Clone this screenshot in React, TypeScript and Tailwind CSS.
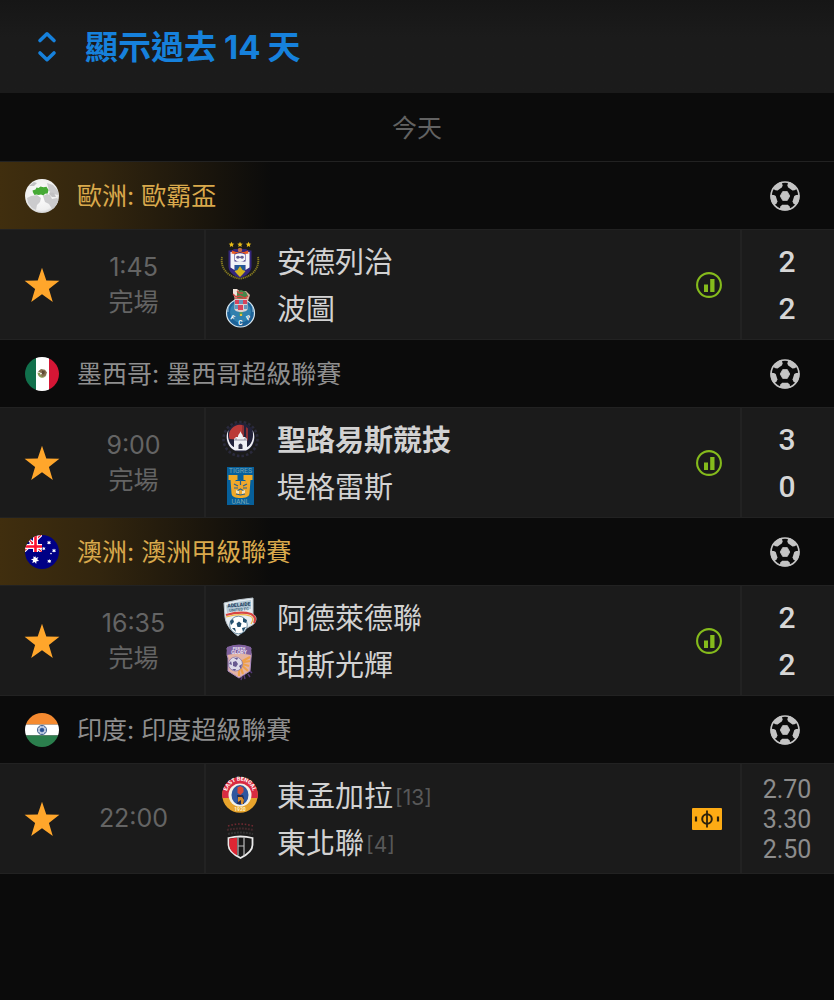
import type { ReactNode } from "react";

/* ---------- interface icons ---------- */

function BallIcon() {
  return (
    <svg viewBox="0 0 30 30" className="size-[30px]" aria-hidden="true">
      <defs>
        <clipPath id="ball-clip">
          <circle cx="15" cy="15" r="14.5" />
        </clipPath>
      </defs>
      <circle cx="15" cy="15" r="14" fill="none" stroke="#c4c4c4" strokeWidth="1.6" />
      <g clipPath="url(#ball-clip)" fill="#c4c4c4">
        {[0, 72, 144, 216, 288].map((angle) => (
          <path
            key={angle}
            transform={`rotate(${angle} 15 15)`}
            d="M8.6 30l2-4.8L12.2 23.8h5.6l1.6 1.4 2 4.8z"
          />
        ))}
      </g>
      <path
        d="M12.7 10.6h4.6l2.5 4.4-2.5 4.4h-4.6L10.200 15z"
        fill="#c4c4c4"
        stroke="#c4c4c4"
        strokeWidth=".8"
        strokeLinejoin="round"
      />
    </svg>
  );
}

function StarIcon() {
  return (
    <svg viewBox="0 0 36 36" className="size-9" aria-hidden="true">
      <path
        d="M18 .8l4.3 12.7 13.1.3-10.5 8.1 3.9 13L18 27.3 7.2 34.9l3.9-13L.6 13.8l13.1-.3z"
        fill="#ffa62b"
      />
    </svg>
  );
}

function StatsIcon() {
  return (
    <svg viewBox="0 0 28 28" className="size-7" role="img" aria-label="統計">
      <circle cx="14" cy="14" r="11.9" fill="none" stroke="#85bb1c" strokeWidth="2.1" />
      <path d="M9 13.4h4V21H9zM15.2 8h4.3v13h-4.3z" fill="#85bb1c" />
    </svg>
  );
}

function PitchIcon() {
  return (
    <svg viewBox="0 0 30 22" className="h-[22px] w-[30px]" role="img" aria-label="陣容">
      <rect width="30" height="22" rx="1" fill="#fdab14" />
      <g fill="none" stroke="#2c210c">
        <circle cx="15" cy="11" r="4.8" strokeWidth="2" />
        <path d="M15 2.5v17" strokeWidth="1.8" />
        <path d="M4 8.5v5M26 8.5v5" strokeWidth="2.2" />
      </g>
    </svg>
  );
}

/* ---------- league badges ---------- */

function Round({ id, children }: { id: string; children: ReactNode }) {
  return (
    <svg viewBox="0 0 34 34" className="size-[34px]" aria-hidden="true">
      <defs>
        <clipPath id={id}>
          <circle cx="17" cy="17" r="17" />
        </clipPath>
      </defs>
      <g clipPath={`url(#${id})`}>{children}</g>
    </svg>
  );
}

function Globe() {
  return (
    <Round id="globe">
      <defs>
        <radialGradient id="globe-sea" cx=".48" cy=".45" r=".58">
          <stop offset="0" stopColor="#fff" />
          <stop offset=".8" stopColor="#efefef" />
          <stop offset="1" stopColor="#c4c4c4" />
        </radialGradient>
      </defs>
      <rect width="34" height="34" fill="url(#globe-sea)" />
      <path
        d="M2 19l4-2 6-1 4 3-1 4-3 3-1 5-4-2-4-5zM18 17l4-2 3 1 2 4 5-1 2 3-4 8-3 0-3-5-4-2zM22 4l6 2 5 6 0 4-5-1-4-3z"
        fill="#cbcbcd"
      />
      <path d="M25 13l4 1 2 4-4 0-3-3zM4 7l5-4 3 1-3 3z" fill="#c2c2c4" />
      <path
        d="M7.500 11.500l3-1 1-2 2 .6 2-1.600 3 .8 3-.6 2 3.300-.8 3.500-2.700.3-1.500 1.800-2.500-1.200-2.500.6-2-.6-2 .6-1.500-2.500z"
        fill="#46aa36"
      />
    </Round>
  );
}

function MexicoFlag() {
  return (
    <Round id="mexico">
      <path d="M0 0h11v34H0z" fill="#11704c" />
      <path d="M11 0h13v34H11z" fill="#fff" />
      <path d="M24 0h10v34H24z" fill="#d51635" />
      <path d="M12.6 15.5c0 6 8 7.4 9 1.5-1.5 3.4-5.6 3-6.6-1z" fill="#8d9a56" />
      <path
        d="M13 14.5l3-2.5 4 .8 2 2.7-1.3 3.3-3.2 1.2-2-2 1.7-1.5-2.2-1z"
        fill="#85704f"
      />
      <path d="M17 13.5l3 1-1 3-2-.5z" fill="#5d4a36" />
    </Round>
  );
}

function AustraliaFlag() {
  const stars: [number, number, number][] = [
    [24, 7.5, 2],
    [18.8, 13.5, 1.7],
    [29, 15.5, 2],
    [24.3, 26, 2.1],
    [26, 18.5, 1],
  ];
  return (
    <Round id="australia">
      <path d="M0 0h34v34H0z" fill="#000085" />
      <svg x="-2" y="0" width="19" height="17" viewBox="0 0 19 17">
        <path d="M-1-2l21 20M-1 18L20-2" stroke="#fff" strokeWidth="3.4" />
        <path d="M-1-2l21 20M-1 18L20-2" stroke="#f0162c" strokeWidth="1.2" />
        <path d="M0 11.5h19M12.5 0v17" stroke="#fff" strokeWidth="5" />
        <path d="M0 11.5h19M12.5 0v17" stroke="#ff1130" strokeWidth="2.6" />
      </svg>
      <path
        d="M10 20.5l1 2.4 2.5-.8-1.3 2.2 1.9 1.8-2.6.2-.3 2.7-1.5-2.1-2.4 1.2.8-2.5-2.3-1.3 2.6-.5.1-2.6 1.6 1z"
        fill="#fff"
      />
      {stars.map(([x, y, r]) => (
        <path
          key={`${x}-${y}`}
          transform={`translate(${x} ${y}) scale(${r})`}
          d="M0-1l.3.6.7-.2-.4.6.3.7-.6-.1-.3.4-.3-.4-.6.1.3-.7-.4-.6.7.2z"
          fill="#fff"
        />
      ))}
    </Round>
  );
}

function IndiaFlag() {
  return (
    <Round id="india">
      <path d="M0 0h34v11.5H0z" fill="#f58a30" />
      <path d="M0 11.5h34v11H0z" fill="#fff" />
      <path d="M0 22.5h34V34H0z" fill="#2b7f4d" />
      <circle cx="17" cy="17" r="4.6" fill="#c9d3e6" stroke="#42618f" strokeWidth="1" />
      <path
        d="M17 12.5v9M12.5 17h9M13.8 13.8l6.4 6.4M20.2 13.8l-6.4 6.4"
        stroke="#7f98c0"
        strokeWidth=".7"
      />
      <circle cx="17" cy="17" r="2.1" fill="#274f93" />
    </Round>
  );
}

/* ---------- club crests ---------- */

function Crest({ children }: { children: ReactNode }) {
  return (
    <svg viewBox="0 0 40 40" className="size-10 shrink-0" aria-hidden="true">
      {children}
    </svg>
  );
}

function Anderlecht() {
  return (
    <Crest>
      {[11.5, 20, 28.5].map((x) => (
        <path
          key={x}
          transform={`translate(${x} 3.5)`}
          d="M0-2.7l.8 1.8 2 .2-1.5 1.3.4 2L0 1.6l-1.7 1 .4-2L-2.8-.7l2-.2z"
          fill="#e9bd17"
        />
      ))}
      <path
        d="M2 16c-2 10 5 20 18 21.500C33 36 40 26 38 16"
        fill="none"
        stroke="#857a1f"
        strokeWidth="1.9"
        strokeDasharray="1.3 .7"
      />
      <path
        d="M8.500 9.500c3 0 4-.5 5.500-1.500h12c1.500 1 2.500 1.500 5.500 1.500v16C31.500 31 26 35 20 37 14 35 8.500 31 8.500 25.500z"
        fill="#34267c"
      />
      <path d="M10.500 11h4v18l-4-2.500zM25.500 11h4v15.500l-4 2.500z" fill="#f4f4f8" />
      <path d="M14 20.500h12v3.500H14z" fill="#f0f0f6" />
      <path d="M12 9.500l4 1.500h8l4-1.500.5 3-3 .5-5.500-2-5.500 2-3-.5z" fill="#e75b21" />
      <circle cx="20" cy="9" r="2.2" fill="#bd6f45" />
      <path d="M15 13.500q5-2.500 10 0v5.500q-5 4-10 0z" fill="#f5f5f7" />
      <path
        d="M16 16q2-2.500 4 0 2-2.500 4 0-.6 3-4 .8-3.400 2.200-4-.8z"
        fill="#5f5c8e"
      />
      <path d="M15 24h10v7l-5 4-5-4z" fill="#245596" />
      <path d="M20 25l2.500 4 3 1-2.500 3-3 3-3-3-2.500-3 3-1z" fill="#d4b51c" />
    </Crest>
  );
}

function Porto() {
  return (
    <Crest>
      <circle cx="20.5" cy="25" r="14" fill="#1d6298" stroke="#d9e6ee" strokeWidth="1.2" />
      <circle cx="20.5" cy="24" r="10.5" fill="#3d94bd" opacity=".6" />
      <path d="M8 24q-1-9 8-12M33 24q1-9-8-12" stroke="#c2dde9" strokeWidth=".7" fill="none" />
      <path d="M13 2l4-1 4 3 5-1 4 4-2 6h-13z" fill="#d8b39d" />
      <path d="M13 1l4 0 1 4-3 4-2-3z" fill="#f1e5dc" />
      <path d="M17 4l4-2 5 2 2 4-5 3-6-1z" fill="#47864a" />
      <path
        d="M13 6l3 3 4-1 5 2 3-2M17 3l2 2 4 0M15 11h12"
        stroke="#d44743"
        strokeWidth="1.3"
        fill="none"
      />
      <path d="M14.5 11h13v10c0 4-13 4-13 0z" fill="#d9cfd0" />
      <path d="M15 12h4v4h-4zM23 12h4v4h-4zM18 17h5v5h-5z" fill="#d6435b" />
      <path d="M19 12h4v4h-4zM15 17h3v4h-3zM24 17h3v4h-3z" fill="#6395bc" />
      <path d="M19.5 24h3v4h-3z" fill="#55a05b" />
      <path d="M20 26h2v2h-2z" fill="#efbf36" />
      <g fill="#fff" fontFamily="Roboto, sans-serif" fontSize="6.5" fontWeight="700" textAnchor="middle">
        <text x="12.5" y="32" transform="rotate(30 12.5 30)">F</text>
        <text x="20.5" y="37">C</text>
        <text x="28.5" y="32" transform="rotate(-30 28.5 30)">P</text>
      </g>
    </Crest>
  );
}

function SanLuis() {
  return (
    <Crest>
      <circle
        cx="20.5"
        cy="20"
        r="17"
        fill="none"
        stroke="#2a2a3c"
        strokeWidth="2.6"
        strokeDasharray="2.6 2"
      />
      <circle cx="20.5" cy="18.5" r="14.5" fill="#22223a" />
      <path d="M9.500 20a11 11 0 0 1 13-14v15z" fill="#bb3a38" />
      <path d="M22 6l2 .5v12h-2zM26 8l2 1.5v12h-2z" fill="#8f2f34" />
      <path
        d="M8.5 11c-4 7-1 17 6.5 20.5h11c7.500-3.500 10.500-13.500 6.500-20.500 2 9-2 16-6.500 17.500H15c-4.500-1.500-8.500-8.500-6.500-17.500z"
        fill="#f0f0f4"
      />
      <path d="M14 30V20l2-2h2c0-3 2-3 2.500-6 .5 3 2.500 3 2.500 6h2l2 2v10z" fill="#f0f0f4" />
      <path d="M18.5 30v-4q2-3 4 0v4z" fill="#33334a" />
      <path d="M14 21h13M16 19v2M25 19v2" stroke="#7b7b90" strokeWidth=".8" />
    </Crest>
  );
}

function Tigres() {
  return (
    <Crest>
      <path d="M7 1h27v38H7z" fill="#07609b" />
      <g fill="#75a4b5" fontFamily="Roboto, sans-serif" fontSize="7" textAnchor="middle">
        <text x="20.5" y="7">TIGRES</text>
        <text x="20.5" y="38.2">UANL</text>
      </g>
      <path
        d="M8.500 9h9v5h-2l1 6h8l1-6h-2V9h9v5h-2l-1 13c0 4-4 5-9 5s-9-1-9-5l-1-13h-2z"
        fill="#f2ab27"
      />
      <path d="M12 18l4-3h9l4 3v6l-4 6h-9l-4-6z" fill="#eea72e" />
      <path
        d="M14 18l4 2M27 18l-4 2M14 22l4 0M27 22h-4M20.5 14v5M17 25l3.500-2 3.500 2M16 28l4.500 1 4.500-1"
        fill="none"
        stroke="#28628b"
        strokeWidth="1.2"
      />
      <path d="M16 24l3 1v3l-3-1zM25 24l-3 1v3l3-1z" fill="#f4e4be" />
    </Crest>
  );
}

function Adelaide() {
  return (
    <Crest>
      <path
        d="M4 6q15-4 29-5v16c3 2 4 5 2 8-1 3-5 4-8 6l-9 8C11 34 6 28 5 20z"
        fill="#e6edf2"
        stroke="#bcc7cf"
        strokeWidth="1"
      />
      <path d="M6 8q13-4 25-5v9q-12 0-24 4z" fill="#b4c8d5" />
      <text
        x="19"
        y="9.5"
        transform="rotate(-5 19 9)"
        fill="#1f4463"
        fontFamily="Roboto, sans-serif"
        fontSize="5"
        fontWeight="900"
        textAnchor="middle"
      >
        ADELAIDE
      </text>
      <text
        x="19"
        y="14"
        transform="rotate(-5 19 13)"
        fill="#41657e"
        fontFamily="Roboto, sans-serif"
        fontSize="4"
        fontWeight="700"
        textAnchor="middle"
      >
        UNITED FC
      </text>
      <path d="M6 18q15-4 25-1 6 3 3 9" fill="none" stroke="#d84542" strokeWidth="2.2" />
      <path d="M6 20q15-4 24-1 5 2 1 8" fill="none" stroke="#f0b743" strokeWidth="1.2" />
      <circle cx="18.5" cy="28" r="8.8" fill="#fff" stroke="#50768f" strokeWidth=".8" />
      <path
        d="M16.5 26.5l2.5-2 2.5 2-1 3.500h-3zM10 24l3-2 1 3-3 3zM23 21l4 2-1 3-3-1zM12 31l3 0 1 4zM22 31l4-1-3 5z"
        fill="#24506f"
      />
    </Crest>
  );
}

function Perth() {
  return (
    <Crest>
      <path
        d="M7 4q12-5 24 0c-1 3 1 6 0 10l-1 13-11 7-11-7V14C6 10 8 8 7 4z"
        fill="#e3b4a5"
        stroke="#a989c0"
        strokeWidth="1"
      />
      <path
        d="M19 19l11-6M19 19l11-2M19 19l10 3M19 19l9 8M19 19l4 11M19 19v13"
        stroke="#eea14c"
        strokeWidth="2.2"
      />
      <path d="M7 3q12-5 24 0v8q-12-3-24 0z" fill="#7f609d" />
      <g fill="#e9e2f2" fontFamily="Roboto, sans-serif" fontWeight="700" textAnchor="middle">
        <text x="19" y="5.5" fontSize="4">PERTH</text>
        <text x="19" y="10.2" fontSize="5">GLORY</text>
      </g>
      <circle cx="15.5" cy="20" r="7" fill="#dedbea" stroke="#8875ab" strokeWidth=".8" />
      <path
        d="M13 18l3-1 2 3-2 3-3-1zM9 20l2-3 1 4zM14 14l4 0-1 2zM19 22l3-2-1 5zM12 25l4 0-1 2z"
        fill="#685a91"
      />
      <path d="M21 36l1-3M25 35l-1-4M30 33l-2-3M32 29l-2-2" stroke="#573b79" strokeWidth="1.4" />
    </Crest>
  );
}

function EastBengal() {
  return (
    <Crest>
      <defs>
        <path id="eb-top" d="M7.2 22A13.2 13.2 0 1 1 32.8 22" />
      </defs>
      <circle cx="20" cy="20" r="17.8" fill="#e8a42c" />
      <path d="M2.500 23a17.800 17.800 0 1 1 35 0z" fill="#d92b42" />
      <text fill="#fff" fontFamily="Roboto, sans-serif" fontSize="5.5" fontWeight="700">
        <textPath href="#eb-top" startOffset="50%" textAnchor="middle">
          EAST BENGAL
        </textPath>
      </text>
      <circle cx="20" cy="20" r="11.5" fill="#f4f2e7" />
      <ellipse cx="20" cy="20" rx="8.5" ry="10" fill="#2e579f" />
      <path d="M17.500 12.500l3-1.500 3 2v4l-3 3-3-2z" fill="#dc4937" />
      <path d="M17 20h6l1 3v6h-7l1-4z" fill="#252c53" />
      <path d="M18 22l4 0 2 3-1 4h-2v-4l-3 2z" fill="#d78d2c" />
      <text
        x="20"
        y="36.3"
        fill="#fff3c6"
        fontFamily="Roboto, sans-serif"
        fontSize="5"
        fontWeight="700"
        textAnchor="middle"
      >
        1920
      </text>
    </Crest>
  );
}

function NorthEast() {
  return (
    <Crest>
      <path
        d="M8 4q12-4 25 0"
        fill="none"
        stroke="#6e2930"
        strokeWidth="1.6"
        strokeDasharray="1.6 1.8"
      />
      <path
        d="M7 8q13-3 27 0"
        fill="none"
        stroke="#41282b"
        strokeWidth="2"
        strokeDasharray="2 1"
      />
      <path
        d="M8 12q12-3 25 0"
        fill="none"
        stroke="#333333"
        strokeWidth="2"
        strokeDasharray="2 1"
      />
      <path
        d="M8.500 16q12-3 24 0v7c0 6-6 10-12 13-6-3-12-7-12-13z"
        fill="#191919"
        stroke="#e9e9e9"
        strokeWidth="1.8"
      />
      <path d="M9.400 16.700q3-.7 7.600-1v17.500c-4.500-2.500-7.600-6-7.600-10.200z" fill="#dd2633" />
      <path d="M18 15.5v18M24 15.5v18M18 24h6" stroke="#bcbcbc" strokeWidth="1.2" />
    </Crest>
  );
}

/* ---------- data ---------- */

type Team = { name: string; crest: ReactNode; rank?: number; winner?: boolean };
type Fixture = {
  league: string;
  badge: ReactNode;
  featured?: boolean;
  time: string;
  status?: string;
  teams: Team[];
  score?: number[];
  odds?: string[];
};

const fixtures: Fixture[] = [
  {
    league: "歐洲: 歐霸盃",
    badge: <Globe />,
    featured: true,
    time: "1:45",
    status: "完場",
    teams: [
      { name: "安德列治", crest: <Anderlecht /> },
      { name: "波圖", crest: <Porto /> },
    ],
    score: [2, 2],
  },
  {
    league: "墨西哥: 墨西哥超級聯賽",
    badge: <MexicoFlag />,
    time: "9:00",
    status: "完場",
    teams: [
      { name: "聖路易斯競技", crest: <SanLuis />, winner: true },
      { name: "堤格雷斯", crest: <Tigres /> },
    ],
    score: [3, 0],
  },
  {
    league: "澳洲: 澳洲甲級聯賽",
    badge: <AustraliaFlag />,
    featured: true,
    time: "16:35",
    status: "完場",
    teams: [
      { name: "阿德萊德聯", crest: <Adelaide /> },
      { name: "珀斯光輝", crest: <Perth /> },
    ],
    score: [2, 2],
  },
  {
    league: "印度: 印度超級聯賽",
    badge: <IndiaFlag />,
    time: "22:00",
    teams: [
      { name: "東孟加拉", crest: <EastBengal />, rank: 13 },
      { name: "東北聯", crest: <NorthEast />, rank: 4 },
    ],
    odds: ["2.70", "3.30", "2.50"],
  },
];

/* ---------- layout ---------- */

function LeagueHeader({ fixture }: { fixture: Fixture }) {
  return (
    <header
      className={`flex h-[68px] items-center border-b border-[#222222] pr-[34px] pl-[25px] ${
        fixture.featured
          ? "bg-[linear-gradient(90deg,#402e0e_0,#32250e_100px,#0b0b0b_272px)] text-[#d9a94c]"
          : "text-[#8e8e8e]"
      }`}
    >
      {fixture.badge}
      <h2 className="ml-[18px] flex-1 text-[25px] leading-9">{fixture.league}</h2>
      <BallIcon />
    </header>
  );
}

function MatchRow({ fixture }: { fixture: Fixture }) {
  return (
    <div className="flex h-[110px] items-stretch border-b border-[#222222] bg-[#1b1b1b]">
      <button
        type="button"
        aria-label="收藏"
        aria-pressed="true"
        className="flex w-[63px] items-center pl-6"
      >
        <StarIcon />
      </button>
      <div className="flex w-[141px] flex-col items-center justify-center text-[25px] leading-[35px] text-[#646464]">
        <time>{fixture.time}</time>
        {fixture.status && <span>{fixture.status}</span>}
      </div>
      <div className="flex flex-1 flex-col justify-center border-l-2 border-[#222222] pl-[14px]">
        {fixture.teams.map((team) => (
          <div key={team.name} className="flex h-[47px] items-center text-[29px] text-[#d2d2d2]">
            {team.crest}
            <span className={team.winner ? "ml-[17px] pt-[3px] font-bold" : "ml-[17px] pt-[3px]"}>
              {team.name}
            </span>
            {team.rank && (
              <span className="ml-0.5 pt-1.5 text-[21px] text-[#585858]">[{team.rank}]</span>
            )}
          </div>
        ))}
      </div>
      <div className="flex w-[62px] items-center justify-center">
        {fixture.odds ? (
          <span className="pr-1">
            <PitchIcon />
          </span>
        ) : (
          <StatsIcon />
        )}
      </div>
      <div className="flex w-[94px] flex-col items-center justify-center border-l-2 border-[#222222] pr-0.5 font-['Roboto',sans-serif]">
        {fixture.score?.map((goals, i) => (
          <span key={i} className="text-[30px] leading-[47px] font-medium text-[#d6d6d6]">
            {goals}
          </span>
        ))}
        {fixture.odds?.map((price) => (
          <span key={price} className="pt-px text-[25px] leading-[29px] text-[#8c8c8c]">
            {price}
          </span>
        ))}
      </div>
    </div>
  );
}

export default function App() {
  return (
    <main className="min-h-screen bg-[#0b0b0b] font-['Inter','Noto_Sans_CJK_TC',sans-serif]">
      <button
        type="button"
        className="flex h-[93px] w-full items-center bg-linear-to-b from-[#161616] to-[#1b1b1b] to-40% pl-[37px] text-[33px] font-bold text-[#1681dc]"
      >
        <svg
          viewBox="0 0 20 32"
          className="h-8 w-5"
          fill="none"
          stroke="currentColor"
          strokeWidth="3.6"
          aria-hidden="true"
        >
          <path
            d="M3 9.500L10 2.800l7 6.700M3 22l7 6.700 7-6.700"
            strokeLinecap="round"
            strokeLinejoin="round"
          />
        </svg>
        <span className="ml-7 flex gap-[7px] pt-0.5">
          <span>顯示過去</span>
          <span>14</span>
          <span>天</span>
        </span>
      </button>
      <h1 className="flex h-[69px] items-center justify-center border-b border-[#222222] pt-1 text-[25px] text-[#626262]">
        今天
      </h1>
      {fixtures.map((fixture) => (
        <section key={fixture.league}>
          <LeagueHeader fixture={fixture} />
          <MatchRow fixture={fixture} />
        </section>
      ))}
    </main>
  );
}
